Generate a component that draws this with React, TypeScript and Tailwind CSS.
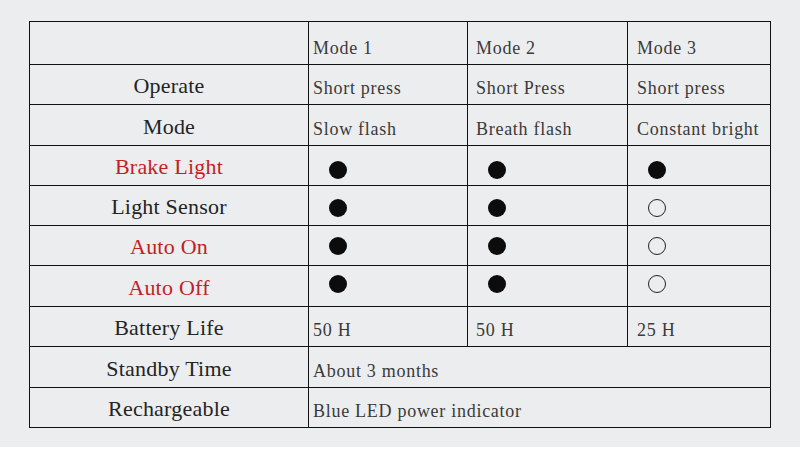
import * as React from "react";

type Mark = "full" | "empty";

type Row = {
  label: string;
  red?: boolean;
  h: string;
  pb: string;
  cells: (string | Mark)[];
};

const rows: Row[] = [
  { label: "", h: "h-[43px]", pb: "pb-[7px]", cells: ["Mode 1", "Mode 2", "Mode 3"] },
  { label: "Operate", h: "h-[40px]", pb: "pb-[7px]", cells: ["Short press", "Short Press", "Short press"] },
  { label: "Mode", h: "h-[41px]", pb: "pb-[7px]", cells: ["Slow flash", "Breath flash", "Constant bright"] },
  // dot rows: the marks drift up a little row by row in the source
  { label: "Brake Light", red: true, h: "h-[40px]", pb: "pb-[6px]", cells: ["full", "full", "full"] },
  { label: "Light Sensor", h: "h-[40px]", pb: "pb-[8px]", cells: ["full", "full", "empty"] },
  { label: "Auto On", red: true, h: "h-[40px]", pb: "pb-[10px]", cells: ["full", "full", "empty"] },
  { label: "Auto Off", red: true, h: "h-[41px]", pb: "pb-[13px]", cells: ["full", "full", "empty"] },
  { label: "Battery Life", h: "h-[40px]", pb: "pb-[7px]", cells: ["50 H", "50 H", "25 H"] },
  { label: "Standby Time", h: "h-[41px]", pb: "pb-[7px]", cells: ["About 3 months"] },
  { label: "Rechargeable", h: "h-[40px]", pb: "pb-[7px]", cells: ["Blue LED power indicator"] },
];

const cols = [
  { w: "w-[159px]", pl: "pl-[4px]" },
  { w: "w-[160px]", pl: "pl-[8px]" },
  { w: "w-[143px]", pl: "pl-[9px]" },
];

function Dot({ kind }: { kind: Mark }) {
  return kind === "full" ? (
    <span className="block w-[18px] h-[18px] rounded-full bg-[#0c0c0c]" />
  ) : (
    <span className="block w-[18px] h-[18px] rounded-full border border-[#222]" />
  );
}

function Cell({ value, w, pl, pb }: { value: string | Mark; w: string; pl: string; pb: string }) {
  if (value === "full" || value === "empty") {
    return (
      <div className={`${w} ${pb} border-r border-b border-[#111] flex items-end pl-[20px]`}>
        <Dot kind={value} />
      </div>
    );
  }
  return (
    <div
      className={`${w} ${pl} ${pb} border-r border-b border-[#111] flex items-end text-[18px] leading-none tracking-[0.04em] text-[#3a3a3a]`}
    >
      {value}
    </div>
  );
}

export default function App() {
  return (
    <div
      className="w-[800px] h-[449px] bg-[#ecedef] flex flex-col"
      style={{ fontFamily: '"Liberation Serif", "Times New Roman", serif' }}
    >
      <div className="flex-1 pt-[21px] pl-[29px]">
        <div className="w-[742px] border-l border-t border-[#111] flex flex-col">
          {rows.map((row, i) => (
            <div key={i} className={`flex ${row.h}`}>
              <div
                className={`w-[279px] border-r border-b border-[#111] flex items-end justify-center pb-[7px] text-[22px] leading-none tracking-[0.01em] ${
                  row.red ? "text-[#c41e24]" : "text-[#242424]"
                }`}
              >
                {row.label}
              </div>
              {row.cells.length === 1 ? (
                <Cell value={row.cells[0]} w="w-[462px]" pl="pl-[4px]" pb={row.pb} />
              ) : (
                row.cells.map((c, j) => (
                  <Cell key={j} value={c} w={cols[j].w} pl={cols[j].pl} pb={row.pb} />
                ))
              )}
            </div>
          ))}
        </div>
      </div>
      <div className="h-[2px] bg-white" />
    </div>
  );
}
